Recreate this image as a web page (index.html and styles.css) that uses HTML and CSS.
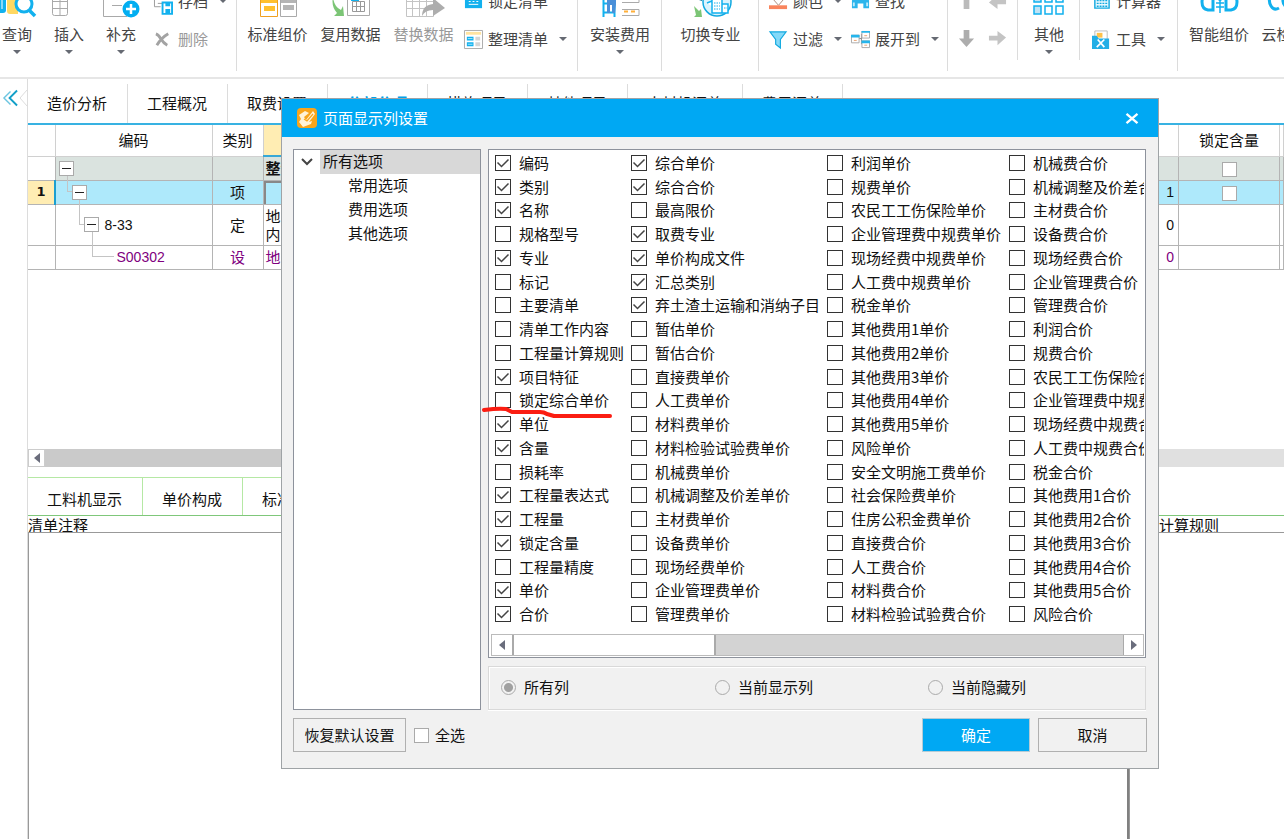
FILE: index.html
```html
<!DOCTYPE html>
<html lang="zh-CN">
<head>
<meta charset="utf-8">
<title>页面显示列设置</title>
<link rel="stylesheet" href="styles.css">
</head>
<body>
<header class="ribbon">
  <div class="group group-edit">
    <button class="big"><svg viewBox="0 0 36 32"><path d="M0 8h7v17q0 3-3 3H0z" fill="#12b1ee"/><path d="M2 8h2v16H2z" fill="#fff" opacity=".5"/><path d="M8 10h11v19h-8q-3 0-3-3z" fill="#ffd862"/><circle cx="25" cy="19" r="8" fill="#fff" stroke="#12b1ee" stroke-width="3"/><path d="M30 25l6 6" stroke="#12b1ee" stroke-width="3.500"/></svg><span>查询</span><i class="caret"></i></button>
    <button class="big"><svg viewBox="0 0 36 32"><path d="M1.500 9.500h15v19q0 2-2 2h-11q-2 0-2-2zM1.500 16.500h15M1.500 23.500h15M9 10v20" fill="#fff" stroke="#a9a9a9"/></svg><span>插入</span><i class="caret"></i></button>
    <button class="big"><svg viewBox="0 0 36 32"><path d="M.5 6v25.500H24M9 20.500h10" fill="none" stroke="#a9a9a9"/><circle cx="28" cy="24" r="8.500" fill="#02aef1"/><path d="M28 19v10M23 24h10" stroke="#fff" stroke-width="2.500"/></svg><span>补充</span><i class="caret"></i></button>
    <div class="stack">
      <button class="small"><svg viewBox="0 0 20 20"><path d="M7 15.500H.500V4M4 12h5" fill="none" stroke="#999"/><path d="M9 11h10v12H9z" fill="#fff" stroke="#12b1ee" stroke-width="2"/><path d="M12 11h5v4h-5zM12 18h5v4h-5z" fill="#12b1ee"/></svg><span>存档</span><i class="caret"></i></button>
      <button class="small" disabled><svg viewBox="0 0 20 20"><path d="M2 4q3 1 5 5 3 5 7 7M15 4Q8 8 3 16" fill="none" stroke="#a3a3a3" stroke-width="3"/></svg><span>删除</span></button>
    </div>
  </div>
  <div class="group group-data">
    <button class="big"><svg viewBox="0 0 36 32"><path d="M.5 8h17v23.500H.500z" fill="#fff" stroke="#f0a020"/><path d="M1 14h16v4H1zM4 21h11v5H4z" fill="#ffc02e"/><path d="M20.500 8h16v23.500h-16z" fill="#fff" stroke="#aaa"/><path d="M21 14h15v4H21zM23 20h11v5H23z" fill="#b5b5b5"/></svg><span>标准组价</span></button>
    <button class="big"><svg viewBox="0 0 36 32"><path d="M0 12q1 10 8 13l2-4 1 10H1l3-3Q-2 21 0 12z" fill="#7cc576"/><path d="M14.500 10v20.500h22V10z" fill="#fff" stroke="#aaa"/><path d="M18 10h8v6h-8z" fill="#12b1ee"/><path d="M19.500 16.500h12v10h-12zM19.500 21.500h12M23.500 16.500v10M27.500 16.500v10" fill="none" stroke="#999"/></svg><span>复用数据</span></button>
    <button class="big" disabled><svg viewBox="0 0 36 32"><path d="M.5 8.500h27v23H.500zM.5 16.500h27M.5 23.500h27M6.500 8v23M13.500 8v23M20.500 8v23" fill="#fff" stroke="#c4c4c4"/><path d="M16 31q0-11 11-12v-6l12 10-12 8v-6q-8 0-11 6z" fill="#adadad"/></svg><span>替换数据</span></button>
    <div class="stack">
      <button class="small"><svg viewBox="0 0 20 20"><path d="M1 2h18v15H1z" fill="#12b1ee"/><path d="M5 10h2M9 10h2M13 10h2M5 13h10" stroke="#fff"/></svg><span>锁定清单</span></button>
      <button class="small"><svg viewBox="0 0 20 20"><path d="M.5.5h19v19H.500z" fill="#fff" stroke="#aaa"/><path d="M2 2h16v3H2z" fill="#ffe3a0"/><path d="M3 7h7v4H3zM3 13h7v4H3z" fill="#12b1ee"/><path d="M4 9h5M4 15h5" stroke="#a7e5fa"/><path d="M12 7h5v4h-5zM12 13h5v4h-5z" fill="#d5d5d5"/></svg><span>整理清单</span><i class="caret"></i></button>
    </div>
  </div>
  <div class="group">
    <button class="big wide"><svg viewBox="0 0 36 32"><path d="M1.500 8v24M12.500 8v24M1 18.500h12M1 27.500h12" stroke="#12b1ee" stroke-width="2" fill="none"/><path d="M5 8h9v11l-1 9h-3v-8H8v8H5z" fill="#4a90d9"/><path d="M20 17.500h17v-6M20 30.500h17v-6H20" fill="none" stroke="#aaa"/><path d="M22 26.500h4M29 26.500h4" stroke="#ffb03a" stroke-width="2"/></svg><span>安装费用</span><i class="caret"></i></button>
  </div>
  <div class="group">
    <button class="big wider"><svg viewBox="0 0 36 32"><circle cx="24" cy="17" r="14" fill="#d9f3fd" stroke="#12a9e0" stroke-width="1.500"/><path d="M14 18l5-2V8h10v20M29 19h6v9H19V16" fill="#fff" stroke="#12b1ee" stroke-width="1.500"/><path d="M21 18h6M21 21h6M21 24h6M31 23h3" stroke="#12b1ee" stroke-dasharray="1.500 1"/><path d="M3 14l6 2V9z" fill="#12789a"/><path d="M1 21l5 5 2-2 1 8H1l2-2z" fill="#7cc576"/></svg><span>切换专业</span></button>
  </div>
  <div class="group group-view">
    <div class="stack">
      <button class="small"><svg viewBox="0 0 20 20"><path d="M3 6l6-4 7 5-6 7z" fill="#fff" stroke="#aa8a7a"/><path d="M0 14h19v4H0z" fill="#f9845c"/></svg><span>颜色</span><i class="caret"></i></button>
      <button class="small"><svg viewBox="0 0 20 20"><path d="M1 2h17l-6 8v9l-5-4v-5z" fill="#84d9f8" stroke="#12a9e0" stroke-width="1.200"/></svg><span>过滤</span><i class="caret"></i></button>
    </div>
    <div class="stack">
      <button class="small"><svg viewBox="0 0 20 20"><path d="M1 17V9l3-6h4v5h4V3h4l3 6v8h-6v-5H7v5z" fill="#2cb5ec"/><path d="M3 15v-4M17 15v-4" stroke="#bdeafc" stroke-width="2"/></svg><span>查找</span></button>
      <button class="small"><svg viewBox="0 0 20 20"><path d="M8 9h3M11 4v11" stroke="#888"/><path d="M.5 5.500h8v8h-8zM11.500 1.500h8v7h-8zM11.500 11.500h8v7h-8z" fill="#fff" stroke="#aaa"/><path d="M0 5h9v3H0zM11 1h9v2h-9zM11 11h9v3h-9z" fill="#25b5ec"/><path d="M3 11h3M14 6h3M14 16h3" stroke="#e8a070"/></svg><span>展开到</span><i class="caret"></i></button>
    </div>
  </div>
  <div class="group short group-move">
    <div class="stack">
      <button class="small" aria-label="上移"><svg viewBox="0 0 20 20"><path d="M7 18V8H3l7-8 7 8h-4v10z" fill="#bbb"/></svg></button>
      <button class="small" aria-label="下移"><svg viewBox="0 0 20 20"><path d="M7 0h6v9h5l-8 9-8-9h5z" fill="#adadad"/></svg></button>
    </div>
    <div class="stack">
      <button class="small" aria-label="左移"><svg viewBox="0 0 20 20"><path d="M19 8v5h-9v5L1 11l9-8v5z" fill="#c4c4c4"/></svg></button>
      <button class="small" aria-label="右移"><svg viewBox="0 0 20 20"><path d="M1 6v5h9v5l9-8-9-7v5z" fill="#c4c4c4"/></svg></button>
    </div>
  </div>
  <div class="group short">
    <button class="big other"><svg viewBox="0 0 36 32"><g fill="#fff" stroke="#12b1ee" stroke-width="1.500"><path d="M3 10h7v7H3zM3 21h7v8H3z" fill="#bfe3f5"/><path d="M14 10h7v7h-7zM14 21h7v8h-7zM25 10h7v7h-7zM25 21h7v8h-7z"/></g></svg><span>其他</span><i class="caret"></i></button>
  </div>
  <div class="group group-tools">
    <div class="stack">
      <button class="small"><svg viewBox="0 0 20 20"><path d="M3 2h15v15H3z" fill="#e8f8fe" stroke="#12a9e0" stroke-width="1.500"/><path d="M5 9h11M5 12h11M5 15h11" stroke="#12a9e0" stroke-width="1.500" stroke-dasharray="2 1"/></svg><span>计算器</span></button>
      <button class="small"><svg viewBox="0 0 20 20"><path d="M3 1h13v10H3z" fill="#fff" stroke="#bbb"/><path d="M5 3h6v5H5z" fill="#ffc14a"/><path d="M0 6h5l2 3h11v11H0z" fill="#22aee6"/><path d="M6 10l7 8M13 10l-8 8" stroke="#fff" stroke-width="1.800"/></svg><span>工具</span><i class="caret"></i></button>
    </div>
  </div>
  <div class="group group-smart">
    <button class="big"><svg viewBox="0 0 36 32"><path d="M12 10v15H7q-6-1-6-8 0-5 4-8M25 10v15h5q6-1 6-8 0-5-4-8" fill="none" stroke="#12b1ee" stroke-width="3"/><path d="M14 10l5 6 5-6M19 16v12M15 18h8M15 22h8" fill="none" stroke="#12b1ee" stroke-width="1.500"/></svg><span>智能组价</span></button>
    <button class="big"><svg viewBox="0 0 36 32"><path d="M13 23q-5 3-8-2-4-7 2-12M20 22q-6-6 0-12 6-4 12 0" fill="none" stroke="#12b1ee" stroke-width="3"/></svg><span>云检查</span></button>
  </div>
</header>

<main class="workspace">
  <aside class="gutter"><button aria-label="收起"><svg viewBox="0 0 16 18"><path d="M8 2L1 9l7 7" fill="none" stroke="#6cc5e0" stroke-width="1.500"/><path d="M15 1L7 9l8 8" fill="none" stroke="#129fc8" stroke-width="2"/></svg></button><svg class="notch" viewBox="0 0 8 18"><path d="M8 1L1 9l7 8" fill="#fff" stroke="#ddd"/></svg></aside>
  <section class="content">
    <nav class="tabs">
      <a href="#">造价分析</a><a href="#">工程概况</a><a href="#">取费设置</a><a href="#" class="active">分部分项</a><a href="#">措施项目</a><a href="#">其他项目</a><a href="#">人材机汇总</a><a href="#">费用汇总</a>
    </nav>
    <table class="sheet">
      <colgroup><col class="c-num"><col class="c-code"><col class="c-kind"><col><col class="c-qty"><col class="c-lock"><col class="c-end"></colgroup>
      <thead><tr><th></th><th>编码</th><th>类别</th><th class="picked">名称</th><th></th><th>锁定含量</th><th></th></tr></thead>
      <tbody>
        <tr class="total"><td></td><td><div class="tree lv1"><button class="toggle" aria-label="折叠"></button></div></td><td></td><td class="name"><b>整个项目</b></td><td></td><td class="mid"><input type="checkbox" aria-label="锁定含量"></td><td></td></tr>
        <tr class="current"><td class="mark">1</td><td><div class="tree lv2"><span class="elbow"></span><button class="toggle" aria-label="折叠"></button></div></td><td class="mid">项</td><td class="cursor"></td><td class="qty">1</td><td class="mid"><input type="checkbox" aria-label="锁定含量"></td><td></td></tr>
        <tr class="tall"><td></td><td><div class="tree lv3"><span class="elbow long"></span><button class="toggle" aria-label="折叠"></button><span class="code">8-33</span></div></td><td class="mid">定</td><td class="name">地<br>内</td><td class="qty">0</td><td></td><td></td></tr>
        <tr class="equip"><td></td><td><div class="tree lv4"><span class="elbow leaf"></span><span class="code">S00302</span></div></td><td class="mid">设</td><td class="name">地</td><td class="qty">0</td><td></td><td></td></tr>
      </tbody>
    </table>
    <div class="sheet-scroll"><button aria-label="向左滚动"><i class="tri left"></i></button><div class="thumb"></div></div>
    <nav class="subtabs"><a href="#">工料机显示</a><a href="#">单价构成</a><a href="#">标准换算</a></nav>
    <div class="notes">
      <section><h2>清单注释</h2><div class="note-box"></div></section>
      <section class="rules"><h2>计算规则</h2><div class="note-box"></div></section>
    </div>
  </section>
</main>

<div class="dialog" role="dialog" aria-labelledby="dlg-title">
  <div class="titlebar">
    <svg class="logo" viewBox="0 0 20 20"><rect width="20" height="20" rx="4" fill="#f8a51b"/><path d="M2 7l6-4 4 2-5 4 2 3 7-9 2 3-6 8 3-1-1 3-8 3-4-5 2-3z" fill="#fff3d8"/><path d="M7 11l3 2 6-7" fill="none" stroke="#f8a51b" stroke-width="1.200"/></svg>
    <h1 id="dlg-title">页面显示列设置</h1>
    <button aria-label="关闭"><svg viewBox="0 0 14 12"><path d="M1 1l12 10M13 1L1 11" stroke="#fff" stroke-width="2.600"/></svg></button>
  </div>
  <div class="dialog-main">
    <ul class="options">
      <li class="root"><svg viewBox="0 0 12 8"><path d="M1 1l5 5 5-5" fill="none" stroke="#444" stroke-width="2"/></svg><span>所有选项</span></li>
      <li>常用选项</li><li>费用选项</li><li>其他选项</li>
    </ul>
    <div class="right">
      <div class="columns">
        <div class="checks">
          <label><input type="checkbox" checked>编码</label>
          <label><input type="checkbox" checked>类别</label>
          <label><input type="checkbox" checked>名称</label>
          <label><input type="checkbox">规格型号</label>
          <label><input type="checkbox" checked>专业</label>
          <label><input type="checkbox">标记</label>
          <label><input type="checkbox">主要清单</label>
          <label><input type="checkbox">清单工作内容</label>
          <label><input type="checkbox">工程量计算规则</label>
          <label><input type="checkbox" checked>项目特征</label>
          <label><input type="checkbox">锁定综合单价</label>
          <label><input type="checkbox" checked>单位</label>
          <label><input type="checkbox" checked>含量</label>
          <label><input type="checkbox">损耗率</label>
          <label><input type="checkbox" checked>工程量表达式</label>
          <label><input type="checkbox" checked>工程量</label>
          <label><input type="checkbox" checked>锁定含量</label>
          <label><input type="checkbox">工程量精度</label>
          <label><input type="checkbox" checked>单价</label>
          <label><input type="checkbox" checked>合价</label>
          <label><input type="checkbox" checked>综合单价</label>
          <label><input type="checkbox" checked>综合合价</label>
          <label><input type="checkbox">最高限价</label>
          <label><input type="checkbox" checked>取费专业</label>
          <label><input type="checkbox" checked>单价构成文件</label>
          <label><input type="checkbox" checked>汇总类别</label>
          <label><input type="checkbox" checked>弃土渣土运输和消纳子目</label>
          <label><input type="checkbox">暂估单价</label>
          <label><input type="checkbox">暂估合价</label>
          <label><input type="checkbox">直接费单价</label>
          <label><input type="checkbox">人工费单价</label>
          <label><input type="checkbox">材料费单价</label>
          <label><input type="checkbox">材料检验试验费单价</label>
          <label><input type="checkbox">机械费单价</label>
          <label><input type="checkbox">机械调整及价差单价</label>
          <label><input type="checkbox">主材费单价</label>
          <label><input type="checkbox">设备费单价</label>
          <label><input type="checkbox">现场经费单价</label>
          <label><input type="checkbox">企业管理费单价</label>
          <label><input type="checkbox">管理费单价</label>
          <label><input type="checkbox">利润单价</label>
          <label><input type="checkbox">规费单价</label>
          <label><input type="checkbox">农民工工伤保险单价</label>
          <label><input type="checkbox">企业管理费中规费单价</label>
          <label><input type="checkbox">现场经费中规费单价</label>
          <label><input type="checkbox">人工费中规费单价</label>
          <label><input type="checkbox">税金单价</label>
          <label><input type="checkbox">其他费用1单价</label>
          <label><input type="checkbox">其他费用2单价</label>
          <label><input type="checkbox">其他费用3单价</label>
          <label><input type="checkbox">其他费用4单价</label>
          <label><input type="checkbox">其他费用5单价</label>
          <label><input type="checkbox">风险单价</label>
          <label><input type="checkbox">安全文明施工费单价</label>
          <label><input type="checkbox">社会保险费单价</label>
          <label><input type="checkbox">住房公积金费单价</label>
          <label><input type="checkbox">直接费合价</label>
          <label><input type="checkbox">人工费合价</label>
          <label><input type="checkbox">材料费合价</label>
          <label><input type="checkbox">材料检验试验费合价</label>
          <label><input type="checkbox">机械费合价</label>
          <label><input type="checkbox">机械调整及价差合价</label>
          <label><input type="checkbox">主材费合价</label>
          <label><input type="checkbox">设备费合价</label>
          <label><input type="checkbox">现场经费合价</label>
          <label><input type="checkbox">企业管理费合价</label>
          <label><input type="checkbox">管理费合价</label>
          <label><input type="checkbox">利润合价</label>
          <label><input type="checkbox">规费合价</label>
          <label><input type="checkbox">农民工工伤保险合价</label>
          <label><input type="checkbox">企业管理费中规费合价</label>
          <label><input type="checkbox">现场经费中规费合价</label>
          <label><input type="checkbox">人工费中规费合价</label>
          <label><input type="checkbox">税金合价</label>
          <label><input type="checkbox">其他费用1合价</label>
          <label><input type="checkbox">其他费用2合价</label>
          <label><input type="checkbox">其他费用3合价</label>
          <label><input type="checkbox">其他费用4合价</label>
          <label><input type="checkbox">其他费用5合价</label>
          <label><input type="checkbox">风险合价</label>
        </div>
        <div class="hscroll"><button aria-label="向左滚动"><i class="tri left"></i></button><div class="thumb"></div><button class="end" aria-label="向右滚动"><i class="tri"></i></button></div>
      </div>
      <div class="scope">
        <label><input type="radio" name="scope" checked>所有列</label>
        <label><input type="radio" name="scope">当前显示列</label>
        <label><input type="radio" name="scope">当前隐藏列</label>
      </div>
    </div>
  </div>
  <div class="actions">
    <button class="reset">恢复默认设置</button>
    <label><input type="checkbox">全选</label>
    <button class="ok">确定</button>
    <button class="cancel">取消</button>
  </div>
  <svg class="scribble" viewBox="0 0 132 14"><path d="M2 6q15-2 22-1l6 3h28q4 0 7 2l7 2h56" fill="none" stroke="#fb1d12" stroke-width="4" stroke-linecap="round" stroke-linejoin="round"/></svg>
</div>
</body>
</html>
```
FILE: styles.css
```css
* { box-sizing: border-box; }

body {
  margin: 0;
  height: 100vh;
  display: flex;
  flex-direction: column;
  position: relative;
  overflow: hidden;
  background: #fff;
  color: #111;
  font: 15px/20px "Noto Sans CJK SC", "Liberation Sans", sans-serif;
}

button {
  margin: 0;
  padding: 0;
  border: 0;
  background: none;
  color: inherit;
  font: inherit;
}

a { color: inherit; text-decoration: none; }
svg { display: block; flex: none; overflow: visible; }
h1, h2 { margin: 0; font: inherit; }

/* Ribbon */
.ribbon {
  flex: none;
  height: 79px;
  display: flex;
  align-items: flex-end;
  overflow: hidden;
  border-bottom: 2px solid #e6e6e6;
  color: #444;
}

.group {
  flex: none;
  height: 92px;
  display: flex;
  align-items: flex-end;
  position: relative;
}

.group::after {
  content: "";
  position: absolute;
  right: 0;
  top: 0;
  bottom: 6px;
  border-right: 1px solid #dcdcdc;
}

.group.short::after { bottom: 17px; }
.group-smart::after { display: none; }

.big {
  width: 52px;
  height: 92px;
  flex: none;
  display: flex;
  flex-direction: column;
  align-items: center;
  white-space: nowrap;
}

.big svg { width: 36px; height: 32px; margin-bottom: 7px; }
.big .caret { margin-top: 6px; }
.big.wide { width: 84px; }
.big.wider { width: 97px; }
.big.other { width: 62px; }

.caret {
  flex: none;
  border: 4px solid transparent;
  border-top: 4px solid #666a73;
  border-bottom: 0;
}

.stack {
  display: flex;
  flex-direction: column;
  gap: 8px;
  padding-bottom: 23px;
}

.small {
  height: 30px;
  display: flex;
  align-items: center;
  gap: 5px;
  white-space: nowrap;
}

.small svg { width: 19px; height: 19px; }
.small .caret { margin-left: 6px; }
button:disabled { color: #999; }

.group-edit { width: 246px; margin-left: -9px; }
.group-edit .stack { padding-left: 7px; }
.group-data { width: 341px; padding-left: 4px; }
.group-data .big { width: 73px; }
.group-data .stack { padding-left: 4px; }
.group-view { width: 189px; padding-left: 10px; gap: 9px; }
.group-move { width: 70px; padding-left: 9px; gap: 12px; }
.group-tools { width: 98px; padding-left: 12px; }
.group-smart { padding-left: 5px; }
.group-smart .big { width: 72px; }
.group-smart .big + .big { width: 58px; }

/* Workspace */
.workspace { flex: 1; display: flex; min-height: 0; }

.gutter {
  flex: none;
  width: 28px;
  display: flex;
  align-items: flex-start;
  justify-content: space-between;
  padding: 10px 0 0 3px;
  border-right: 1px solid #dcdcdc;
}

.gutter button svg { width: 15px; height: 18px; }
.notch { width: 8px; height: 18px; }

.content { flex: 1; min-width: 0; display: flex; flex-direction: column; }

.tabs {
  height: 46px;
  flex: none;
  display: flex;
  padding-top: 5px;
  border-bottom: 2px solid #38b2e2;
}

.tabs a {
  padding: 9px 20px 0 19px;
  border-right: 1px solid #dcdcdc;
}

.tabs .active { color: #00a2e8; font-weight: 700; }

.sheet {
  width: 100%;
  flex: none;
  table-layout: fixed;
  border-collapse: collapse;
}

.c-num { width: 27px; }
.c-code { width: 157px; }
.c-kind { width: 51px; }
.c-qty { width: 80px; }
.c-lock { width: 101px; }
.c-end { width: 4px; }

.sheet th, .sheet td {
  height: 24px;
  padding: 0;
  border: 1px solid #b4b4b4;
  border-left: 0;
}

.sheet th {
  height: 31px;
  border-color: #d0d0d0;
  border-top: 0;
  font-weight: 400;
}

.sheet .picked { background: #ffedb3; border-bottom: 2px solid #38a8d6; }
.sheet .tall td { height: 41px; line-height: 18px; }
.sheet .total td { background: #dae3df; }
.sheet .current td { background: #aee9fb; }
.sheet .total td:first-child { background: #fff; }
.sheet .current .mark {
  background: #ffedb3;
  border-right: 2px solid #1b9fd0;
  text-align: center;
  font: bold 13px/18px "DejaVu Sans", sans-serif;
}
.sheet .cursor { box-shadow: inset 1px 1px 0 1px #888; }
.mid { text-align: center; }
.sheet .name { padding-left: 2px; vertical-align: middle; }
.sheet .qty { text-align: right; padding-right: 4px; font: 14px/18px "Liberation Sans", sans-serif; }
.equip { color: #800080; }

.mid input { vertical-align: middle; margin: 0 0 3px; }

.tree {
  display: flex;
  align-items: center;
  position: relative;
  height: 16px;
}

.lv1 { padding-left: 3px; }
.lv2 { padding-left: 16px; }
.lv3 { padding-left: 28px; }
.lv4 { padding-left: 61px; }

.toggle {
  width: 15px;
  height: 15px;
  flex: none;
  border: 1px solid #aaa;
  background: linear-gradient(#222, #222) center / 9px 1px no-repeat #fff;
}

.elbow {
  position: absolute;
  left: 11px;
  bottom: 8px;
  width: 5px;
  height: 16px;
  border: solid #c4c4c4;
  border-width: 0 0 1px 1px;
}

.elbow.long { left: 23px; height: 25px; }
.elbow.leaf { left: 36px; width: 22px; height: 25px; }
.code { font: 14px/16px "Liberation Sans", sans-serif; }
.toggle + .code { margin-left: 6px; }

.tri {
  display: block;
  width: 0;
  border: 5px solid transparent;
  border-left: 6px solid #6a6d7c;
  border-right: 0;
}

.tri.left {
  border-left: 0;
  border-right: 6px solid #6a6d7c;
}

.sheet-scroll {
  flex: none;
  display: flex;
  height: 18px;
  margin-top: auto;
  background: #e0e0e0;
}

.sheet-scroll button {
  width: 17px;
  display: grid;
  place-items: center;
  border: 1px solid #ccc;
  background: #fff;
}

.sheet-scroll .thumb { width: 60%; background: #cacaca; }

.subtabs {
  flex: none;
  display: flex;
  margin-top: 10px;
  height: 39px;
  border-bottom: 1px solid #7fc77a;
}

.subtabs a {
  padding: 11px 20px 0 19px;
  border-top: 1px solid #b5e8a4;
  border-right: 1px solid #b5e8a4;
}

.subtabs a:last-child { border-right: 0; flex: 0 0 60%; }

.notes { flex: none; height: 323px; display: flex; }
.notes section { display: flex; flex-direction: column; flex: none; width: 155px; }
.notes section:first-child { flex: 1; border-right: 2px solid #808080; }
.notes h2 { height: 16px; line-height: 18px; }
.notes .rules h2 { padding-left: 30px; }
.note-box { flex: 1; border: solid #999; border-width: 1px 0 0 1px; }

/* Form controls */
input[type="checkbox"] {
  appearance: none;
  flex: none;
  width: 15px;
  height: 15px;
  margin: 0;
  border: 1px solid #aaa;
  background: #fff;
}

label { display: flex; align-items: center; white-space: nowrap; }

/* Dialog */
.dialog {
  position: absolute;
  left: 281px;
  top: 98px;
  width: 878px;
  display: flex;
  flex-direction: column;
  border: 1px solid #9fa3a6;
  background: #f1f1f1;
}

.titlebar {
  height: 38px;
  display: flex;
  align-items: center;
  gap: 6px;
  padding: 0 19px 0 15px;
  background: #00a8f3;
  color: #fff;
}

.titlebar h1 { flex: 1; }
.logo { width: 20px; height: 20px; }
.titlebar button svg { width: 14px; height: 11px; }

.dialog-main {
  display: flex;
  align-items: stretch;
  gap: 7px;
  padding: 12px 12px 8px 11px;
}

.options {
  flex: none;
  width: 188px;
  margin: 0;
  padding: 0;
  list-style: none;
  border: 1px solid #8d929c;
  background: #fff;
}

.options li { height: 24px; line-height: 22px; padding-left: 54px; }
.options .root { display: flex; align-items: center; padding-left: 7px; gap: 7px; }
.options .root svg { width: 12px; height: 8px; }
.options .root span { flex: 1; height: 24px; padding-left: 3px; background: #d8d8d8; }

.right { flex: 1; min-width: 0; display: flex; flex-direction: column; gap: 8px; }

.columns {
  padding: 1px 1px 1px 2px;
  border: 1px solid #8d929c;
  background: #fff;
}

.checks {
  height: 475px;
  display: grid;
  grid-template-rows: repeat(20, 1fr);
  grid-template-columns: 136px 196px 182px 136px;
  grid-auto-flow: column;
  padding-left: 4px;
  overflow: hidden;
}

.checks label { gap: 8px; min-width: 0; }

.checks input[type="checkbox"] {
  width: 16px;
  height: 16px;
  border-color: #333;
}

.checks input:checked {
  background: url("data:image/svg+xml,%3Csvg xmlns='http://www.w3.org/2000/svg' viewBox='0 0 14 14'%3E%3Cpath d='M1.500 6.500l4 4 7-7' fill='none' stroke='%23444' stroke-width='1.500'/%3E%3C/svg%3E") center / 14px 14px no-repeat #fff;
}

.hscroll {
  display: flex;
  height: 22px;
  margin-top: 8px;
  border: 1px solid #bbb;
  background: #d3d3d3;
}

.hscroll button {
  width: 20px;
  display: grid;
  place-items: center;
  background: #fff;
}

.hscroll .thumb {
  width: 204px;
  border: solid #aaa;
  border-width: 0 2px;
  background: #fff;
}

.hscroll .end { margin-left: auto; border-left: 1px solid #aaa; }

.scope {
  height: 44px;
  display: grid;
  grid-template-columns: 214px 213px 1fr;
  align-items: center;
  padding: 0 0 2px 12px;
  border: 1px solid #d9d9d9;
  box-shadow: inset 1px 1px 0 #fff, 0 1px 0 #fff;
}

.scope label { gap: 8px; }

.scope input {
  appearance: none;
  width: 15px;
  height: 15px;
  margin: 0;
  border: 1px solid #aaa;
  border-radius: 50%;
}

.scope input:checked { background: radial-gradient(#a0a0a0 4px, transparent 5px); }

.actions {
  display: flex;
  align-items: center;
  gap: 8px;
  padding: 0 11px 16px;
}

.actions button { height: 34px; border: 1px solid #b0b0b0; }
.actions label { gap: 6px; margin-right: auto; }
.actions .reset { width: 113px; }
.actions .ok { width: 108px; background: #00a8f3; color: #fff; border-color: #b5cbd5; }
.actions .cancel { width: 109px; }

.scribble {
  position: absolute;
  left: 200px;
  top: 305px;
  width: 132px;
  height: 14px;
}
```
